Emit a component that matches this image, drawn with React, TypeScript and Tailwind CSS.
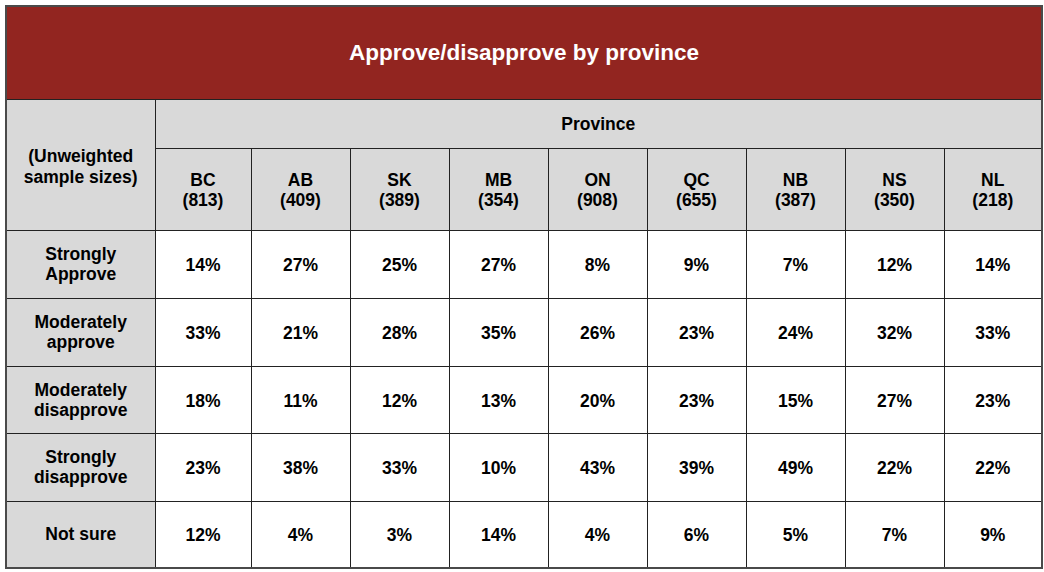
const provinces = [
  { code: "BC", n: 813 },
  { code: "AB", n: 409 },
  { code: "SK", n: 389 },
  { code: "MB", n: 354 },
  { code: "ON", n: 908 },
  { code: "QC", n: 655 },
  { code: "NB", n: 387 },
  { code: "NS", n: 350 },
  { code: "NL", n: 218 },
];

const rows: { label: [string, string?]; values: string[]; h: string }[] = [
  { label: ["Strongly", "Approve"], values: ["14%", "27%", "25%", "27%", "8%", "9%", "7%", "12%", "14%"], h: "h-[68px]" },
  { label: ["Moderately", "approve"], values: ["33%", "21%", "28%", "35%", "26%", "23%", "24%", "32%", "33%"], h: "h-[68px]" },
  { label: ["Moderately", "disapprove"], values: ["18%", "11%", "12%", "13%", "20%", "23%", "15%", "27%", "23%"], h: "h-[67px]" },
  { label: ["Strongly", "disapprove"], values: ["23%", "38%", "33%", "10%", "43%", "39%", "49%", "22%", "22%"], h: "h-[68px]" },
  { label: ["Not sure"], values: ["12%", "4%", "3%", "14%", "4%", "6%", "5%", "7%", "9%"], h: "h-[67px]" },
];

const colWidths = ["w-[96px]", "w-[99px]", "w-[99px]", "w-[99px]", "w-[99px]", "w-[99px]", "w-[99px]", "w-[99px]", "w-[98px]"];

export default function App() {
  return (
    <div className="h-[572px] w-[1044px] bg-white pl-[5px] pt-[5px] font-['Liberation_Sans',Arial,sans-serif] font-bold text-black">
      <table className="w-[1036px] table-fixed border-collapse border-2 border-[#4a4a4a] text-center text-[17.5px] leading-[20px]">
        <colgroup>
          <col className="w-[149px]" />
          {colWidths.map((w, i) => (
            <col key={i} className={w} />
          ))}
        </colgroup>
        <thead>
          <tr>
            <th colSpan={10} className="h-[93px] border border-[#222] bg-[#922520] text-[22.5px] text-white">
              Approve/disapprove by province
            </th>
          </tr>
          <tr>
            <th rowSpan={2} className="border border-[#222] bg-[#d9d9d9] pt-[4px] leading-[21px]">
              (Unweighted
              <br />
              sample sizes)
            </th>
            <th colSpan={9} className="h-[49px] border border-[#222] bg-[#d9d9d9]">
              Province
            </th>
          </tr>
          <tr>
            {provinces.map((p) => (
              <th key={p.code} className="h-[82px] border border-[#222] bg-[#d9d9d9] pt-[2px]">
                {p.code}
                <br />({p.n})
              </th>
            ))}
          </tr>
        </thead>
        <tbody>
          {rows.map((r, i) => (
            <tr key={i} className={r.h}>
              <th className="border border-[#222] bg-[#d9d9d9]">
                {r.label[0]}
                {r.label[1] && (
                  <>
                    <br />
                    {r.label[1]}
                  </>
                )}
              </th>
              {r.values.map((v, j) => (
                <td key={j} className="border border-[#222] bg-white pt-[2px]">
                  {v}
                </td>
              ))}
            </tr>
          ))}
        </tbody>
      </table>
    </div>
  );
}
